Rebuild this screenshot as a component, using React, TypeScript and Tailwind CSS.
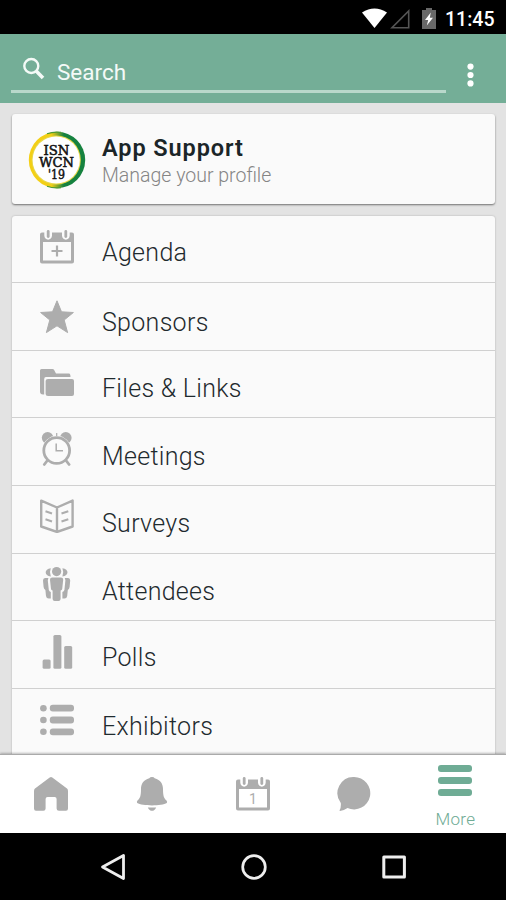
import type { ReactNode } from 'react'
import clsx from 'clsx'

type MenuItem = {
  label: string
  icon: ReactNode
  row: string
  iconPad: string
  textPad: string
}

function CalendarIcon({ children }: { children: ReactNode }) {
  return (
    <svg width="34" height="34" viewBox="0 0 34 34" fill="currentColor">
      <path
        fillRule="evenodd"
        d="M2 2.5H4.3V5.5C4.3 11 12 11 12 5.5V2.5H22V5.5C22 11 29.7 11 29.7 5.5V2.5H32Q34 2.5 34 4.5V31.5Q34 33.5 32 33.5H2Q0 33.5 0 31.5V4.5Q0 2.5 2 2.5ZM3 12V30.5H31V12Z"
      />
      <rect x="6.8" y="0" width="2.8" height="8" rx="1.4" />
      <rect x="24.4" y="0" width="2.8" height="8" rx="1.4" />
      {children}
    </svg>
  )
}

const StarIcon = (
  <svg width="34" height="34" viewBox="0 0 34 34" fill="currentColor" stroke="currentColor" strokeWidth="1" strokeLinejoin="round">
    <path d="M17 .8 21.5 11.8 33.4 12.5 24.2 20 27.6 32.6 17 25.8 6.4 32.6 9.8 20 .6 12.5 12.5 11.8Z" />
  </svg>
)

const FolderIcon = (
  <svg width="34" height="34" viewBox="0 0 34 34" fill="currentColor">
    <path d="M1.5 3H12.5Q13.5 3 14 3.8L16 7.5H29Q30.5 7.5 30.5 11H6Q4.2 11 4.2 13V28.5H3Q0 28.5 0 25.5V4.5Q0 3 1.5 3Z" />
    <path d="M8 13H32Q34 13 34 15V28Q34 30 32 30H8Q5.6 30 5.6 28V15Q5.6 13 8 13Z" />
  </svg>
)

const AlarmIcon = (
  <svg width="34" height="34" viewBox="0 0 34 34" fill="none" stroke="currentColor">
    <circle cx="7.6" cy="5.8" r="5.8" fill="currentColor" stroke="none" />
    <circle cx="25.8" cy="5.8" r="5.8" fill="currentColor" stroke="none" />
    <circle cx="16.7" cy="18.5" r="14.4" stroke="#fafafa" strokeWidth="1" />
    <circle cx="16.7" cy="18.5" r="12.9" fill="#fafafa" strokeWidth="2.8" />
    <path d="M16.2 11.5V18.7H23" strokeWidth="1.5" />
    <path d="M16.7 1V4" strokeWidth="1.2" />
    <path d="M7 29 4.3 32.5M26.4 29 29.1 32.5" strokeWidth="2.8" strokeLinecap="round" />
  </svg>
)

const BookIcon = (
  <svg width="34" height="34" viewBox="0 0 34 34" fill="none" stroke="currentColor" strokeWidth="2.4" strokeLinejoin="round">
    <path d="M1.2 1.6 17 8.5 32.6 1.6V27.5L17 33 1.2 27.5ZM17 8.5V32" />
    <path d="M5.5 12.2 12 14.5M5.5 20.2 12 22.5M28.3 12.2 21.5 14.5M28.3 20.2 21.5 22.5" strokeWidth="2" />
  </svg>
)

const PeopleIcon = (
  <svg width="34" height="34" viewBox="0 0 34 34" fill="currentColor">
    <circle cx="16.6" cy="4.6" r="4.6" />
    <path d="M10.8 1.3C4 1.8 4 9 10.8 9.6Q9 5.5 10.8 1.3ZM22.4 1.3C29.2 1.8 29.2 9 22.4 9.6Q24.2 5.5 22.4 1.3Z" />
    <path d="M12.3 10.6H20.9Q23.3 10.6 23.2 12.8L22.2 22Q22 23.4 20.6 23.6V32Q20.4 34 18.6 34H14.6Q12.8 34 12.6 32V23.6Q11.2 23.4 11 22L10 12.8Q9.9 10.6 12.3 10.6Z" />
    <path d="M5 11H8.4L7.8 13.3L8.8 23Q9.2 24.7 10.8 25V31.5H8.7Q6.4 31.5 6 29L5.4 23Q3.8 22 3.6 20L3 13.5Q3 11 5 11ZM28.2 11H24.8L25.4 13.3L24.4 23Q24 24.7 22.4 25V31.5H24.5Q26.8 31.5 27.2 29L27.8 23Q29.4 22 29.6 20L30.2 13.5Q30.2 11 28.2 11Z" />
  </svg>
)

const PollsIcon = (
  <svg width="34" height="34" viewBox="0 0 34 34" fill="currentColor">
    <rect x="2.6" y="24.5" width="8" height="9.2" rx="1.5" />
    <rect x="13.4" y="0" width="8" height="33.7" rx="1.5" />
    <rect x="24.2" y="11" width="8" height="22.7" rx="1.5" />
  </svg>
)

const ListIcon = (
  <svg width="34" height="34" viewBox="0 0 34 34" fill="currentColor">
    <circle cx="3.4" cy="5.2" r="3.3" />
    <circle cx="3.4" cy="17" r="3.3" />
    <circle cx="3.4" cy="28.8" r="3.3" />
    <rect x="9.8" y="1.8" width="24.2" height="6.8" rx="3" />
    <rect x="9.8" y="13.6" width="24.2" height="6.8" rx="3" />
    <rect x="9.8" y="25.4" width="24.2" height="6.8" rx="3" />
  </svg>
)

const items: MenuItem[] = [
  {
    label: 'Agenda',
    icon: (
      <CalendarIcon>
        <path d="M15.9 15.5H18.1V19.9H22.5V22.1H18.1V26.5H15.9V22.1H11.5V19.9H15.9Z" />
      </CalendarIcon>
    ),
    row: 'h-[67px]',
    iconPad: 'pt-3.5',
    textPad: 'pt-[22px]',
  },
  { label: 'Sponsors', icon: StarIcon, row: 'h-[68px]', iconPad: 'pt-[17px]', textPad: 'pt-[25px]' },
  { label: 'Files & Links', icon: FolderIcon, row: 'h-[67px]', iconPad: 'pt-[15px]', textPad: 'pt-[23px]' },
  { label: 'Meetings', icon: AlarmIcon, row: 'h-[68px]', iconPad: 'pt-3.5', textPad: 'pt-6' },
  { label: 'Surveys', icon: BookIcon, row: 'h-[68px]', iconPad: 'pt-[13px]', textPad: 'pt-[23px]' },
  { label: 'Attendees', icon: PeopleIcon, row: 'h-[67px]', iconPad: 'pt-[13px]', textPad: 'pt-[23px]' },
  { label: 'Polls', icon: PollsIcon, row: 'h-[68px]', iconPad: 'pt-3.5', textPad: 'pt-[22px]' },
  { label: 'Exhibitors', icon: ListIcon, row: 'h-[68px]', iconPad: 'pt-3.5', textPad: 'pt-[23px]' },
]

function StatusBar() {
  return (
    <div className="flex h-[34px] shrink-0 items-center justify-end bg-black pt-[3px] pr-[11px] text-white">
      <svg width="25" height="21" viewBox="0 0 25 21" fill="#fff">
        <path d="M0 4.5Q12.5-3.5 25 4.5L12.5 20Z" />
      </svg>
      <svg className="ml-[3px]" width="20" height="20" viewBox="0 0 20 20" fill="none" stroke="#555" strokeWidth="1.6">
        <path d="M2 18.8H18.7V2Z" />
      </svg>
      <svg className="ml-3" width="14" height="21" viewBox="0 0 14 21">
        <path d="M4 0H10V2H14V21H0V2H4Z" fill="#686868" />
        <path d="M8.8 4.5 3 12H6.2L4.8 17.5 11 9.8H7.8Z" fill="#fff" />
      </svg>
      <span className="ml-[9px] w-[50px] pt-0.5 text-[19.5px] leading-none font-medium whitespace-nowrap">11:45</span>
    </div>
  )
}

function Header() {
  return (
    <div className="flex h-[69px] shrink-0 bg-[#74ae97] pl-[11px] text-white">
      <div className="flex h-[59px] w-[435px] border-b-[3px] border-[#b9d8cb] pl-3">
        <svg className="mt-[23px]" width="22" height="24" viewBox="0 0 22 24" fill="none" stroke="#f4faf7">
          <circle cx="8.3" cy="9" r="7" strokeWidth="2.4" />
          <path d="M13.2 14 20 21" strokeWidth="3.6" />
        </svg>
        <span className="ml-3 pt-6 text-[22.5px] leading-7 text-[#f4faf7]">Search</span>
      </div>
      <svg className="mt-[29px] ml-[21px]" width="7" height="24" viewBox="0 0 7 24" fill="#fff">
        <circle cx="3.5" cy="3.6" r="3.1" />
        <circle cx="3.5" cy="12" r="3.1" />
        <circle cx="3.5" cy="20.4" r="3.1" />
      </svg>
    </div>
  )
}

function EventLogo() {
  return (
    <svg width="58" height="58" viewBox="0 0 58 58">
      <defs>
        <linearGradient id="ring" x1="0" x2="1" y1="0" y2="0">
          <stop offset=".4" stopColor="#f3cf16" />
          <stop offset=".62" stopColor="#16823f" />
        </linearGradient>
      </defs>
      <circle cx="29" cy="29" r="28.2" fill="url(#ring)" />
      <path d="M19 2.8A28 28 0 0 1 33 1.4M19 55.2A28 28 0 0 0 33 56.6" fill="none" stroke="#4c9a35" strokeWidth="1.2" />
      <circle cx="28.2" cy="29" r="24.6" fill="#e8d84a" />
      <circle cx="28.2" cy="29" r="23.6" fill="#fff" />
      <g fontFamily="'DejaVu Serif', serif" fontSize="13" fill="#111" stroke="#111" strokeWidth=".5" textAnchor="middle">
        <text x="28.5" y="24" textLength="26" lengthAdjust="spacingAndGlyphs">ISN</text>
        <text x="28.5" y="36" textLength="35" lengthAdjust="spacingAndGlyphs">WCN</text>
        <text x="28.5" y="48" textLength="17" lengthAdjust="spacingAndGlyphs">'19</text>
      </g>
    </svg>
  )
}

function TabBar() {
  return (
    <div className="z-10 flex h-[79px] shrink-0 border-t border-[#aaa] bg-white text-[#adadad] shadow-[0_-1px_2px_rgba(0,0,0,0.25)]">
      <div className="flex flex-1 justify-center pt-[22px]">
        <svg width="34" height="34" viewBox="0 0 34 34" fill="currentColor">
          <path d="M15.7.5Q17-.4 18.3.5L33 11.5Q34 12.3 34 14V31.5Q34 33.7 32 33.7H25Q22.6 33.7 22.6 31.5V22Q22.6 20 20.6 20H13.6Q11.6 20 11.6 22V31.5Q11.6 33.7 9.4 33.7H2Q0 33.7 0 31.5V14Q0 12.3 1 11.5Z" />
        </svg>
      </div>
      <div className="flex flex-1 justify-center pt-[22px]">
        <svg width="34" height="34" viewBox="0 0 34 34" fill="currentColor">
          <path d="M17 0Q19 0 19.7 1.2C25.5 2.8 28 7 28 12C28 19 29 21.5 31.5 23.5Q32.6 24.5 31.8 26C27 29.2 7 29.2 2.2 26Q1.4 24.5 2.5 23.5C5 21.5 6 19 6 12C6 7 8.5 2.8 14.3 1.2Q15 0 17 0Z" />
          <path d="M12.8 30.4H21.2Q19.5 33.8 17 33.8Q14.5 33.8 12.8 30.4Z" />
        </svg>
      </div>
      <div className="flex flex-1 justify-center pt-[22px]">
        <CalendarIcon>
          <text x="17" y="26.5" fontSize="14" fontFamily="Roboto, sans-serif" textAnchor="middle">1</text>
        </CalendarIcon>
      </div>
      <div className="flex flex-1 justify-center pt-[22px]">
        <svg width="34" height="34" viewBox="0 0 34 34" fill="currentColor">
          <path d="M17 0A16.2 16.2 0 1 1 10.5 31Q7 33.5 3 34Q2.3 34 2.7 33Q4.2 30 3.8 26A16.2 16.2 0 0 1 17 0Z" />
        </svg>
      </div>
      <div className="flex flex-1 flex-col items-center pt-2.5 text-[#6fac95]">
        <svg width="34" height="32" viewBox="0 0 34 32" fill="currentColor">
          <rect x="0" y="0" width="34" height="7" rx="3" />
          <rect x="0" y="12" width="34" height="7" rx="3" />
          <rect x="0" y="24" width="34" height="7" rx="3" />
        </svg>
        <span className="mt-3 text-[17px] leading-5 font-[350] tracking-[0.3px]">More</span>
      </div>
    </div>
  )
}

function SystemNav() {
  return (
    <div className="z-10 flex h-[67px] shrink-0 items-center justify-between bg-black px-[100px] text-[#eee]">
      <svg width="26" height="28" viewBox="0 0 26 28" fill="none" stroke="currentColor" strokeWidth="2.8" strokeLinejoin="round">
        <path d="M2.5 14 23.5 2.5V25.5Z" />
      </svg>
      <svg width="26" height="26" viewBox="0 0 26 26" fill="none" stroke="currentColor" strokeWidth="2.7">
        <circle cx="13" cy="13" r="11.3" />
      </svg>
      <svg width="24" height="24" viewBox="0 0 24 24" fill="none" stroke="currentColor" strokeWidth="3" strokeLinejoin="round">
        <rect x="1.8" y="2" width="20.6" height="20" />
      </svg>
    </div>
  )
}

export default function App() {
  return (
    <div className="flex h-[900px] w-[506px] flex-col overflow-hidden bg-[#e3e3e3] font-['Roboto',sans-serif]">
      <StatusBar />
      <Header />

      <div className="flex min-h-0 flex-1 flex-col gap-3 overflow-hidden pt-[11px] pr-[11px] pl-3">
        <div className="flex h-[90px] shrink-0 rounded-[3px] bg-[#fafafa] pt-[17px] pl-4 shadow-[0_1px_2px_rgba(0,0,0,0.5)]">
          <EventLogo />
          <div className="pl-4">
            <p className="mt-[3px] text-[23.5px] leading-7 font-semibold tracking-[0.9px] text-[#1b2528]">App Support</p>
            <p className="text-[19.5px] leading-7 font-[350] text-[#858585]">Manage your profile</p>
          </div>
        </div>

        <div className="shrink-0 rounded-t-[3px] bg-[#fafafa] shadow-[0_0_2px_rgba(0,0,0,0.25)]">
          {items.map(({ label, icon, row, iconPad, textPad }) => (
            <div key={label} className={clsx('flex border-b-[1.5px] border-[#d0d0d0] pl-7', row)}>
              <div className={clsx('w-[62px] text-[#adadad]', iconPad)}>{icon}</div>
              <span className={clsx('text-[25px] leading-[30px] font-[350] tracking-[0.3px] text-[#1f2a2e]', textPad)}>{label}</span>
            </div>
          ))}
        </div>
      </div>

      <TabBar />
      <SystemNav />
    </div>
  )
}
